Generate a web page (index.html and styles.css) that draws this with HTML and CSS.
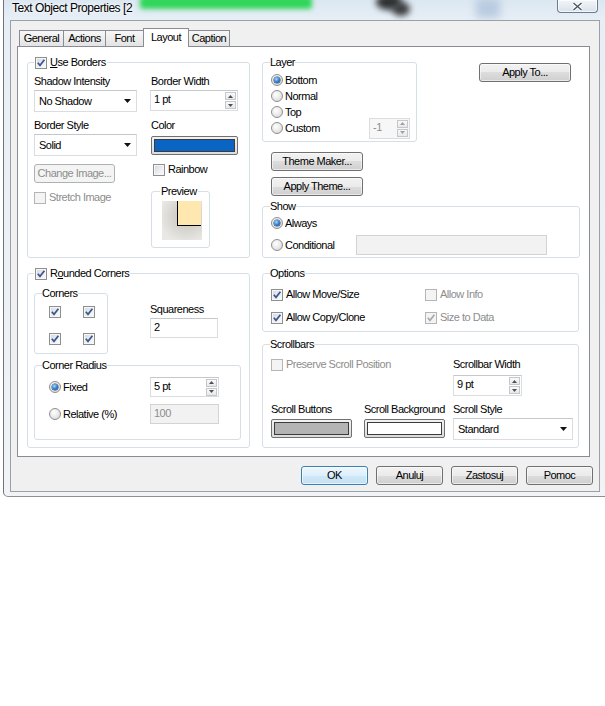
FILE: index.html
```html
<!DOCTYPE html>
<html lang="pl">
<head>
<meta charset="utf-8">
<title>Text Object Properties</title>
<link rel="stylesheet" href="styles.css">
</head>
<body>
<div class="window">
  <div class="titlebar">
    <span class="blur blur-green"></span>
    <span class="blur blur-dark"></span>
    <span class="blur blur-dark2"></span>
    <span class="blur blur-blue"></span>
    <span class="title">Text Object Properties [2</span>
    <span class="close"><svg width="11" height="9" viewBox="0 0 11 9"><path d="M1.5 1 L9.5 8 M9.5 1 L1.5 8" stroke="#ffffff" stroke-width="3.4"/><path d="M1.5 1 L9.5 8 M9.5 1 L1.5 8" stroke="#505860" stroke-width="1.5"/></svg></span>
  </div>
  <div class="client">
    <div class="tabs">
      <div class="tab t-general">General</div>
      <div class="tab t-actions">Actions</div>
      <div class="tab t-font">Font</div>
      <div class="tab t-layout active">Layout</div>
      <div class="tab t-caption">Caption</div>
    </div>
    <div class="panel">

      <fieldset class="grp g-borders">
        <legend><span class="chk"><span class="cb on"><svg viewBox="0 0 10 10"><path d="M1.8 4.8 L4 7.4 L8.4 1.8"/></svg></span><span><u>U</u>se Borders</span></span></legend>
        <div class="ub">
          <div class="ub-left">
            <div class="lbl">Shadow Intensity</div>
            <div class="combo w103 mt2"><span>No Shadow</span><svg class="arr" width="7" height="4" viewBox="0 0 7 4"><path d="M0 0H7L3.5 4Z"/></svg></div>
            <div class="lbl mt7">Border Style</div>
            <div class="combo w103 mt2"><span>Solid</span><svg class="arr" width="7" height="4" viewBox="0 0 7 4"><path d="M0 0H7L3.5 4Z"/></svg></div>
            <div class="btn dis w81 mt8">Change Image...</div>
            <div class="chk dis mt8"><span class="cb"></span><span>Stretch Image</span></div>
          </div>
          <div class="ub-right">
            <div class="lbl pl1">Border Width</div>
            <div class="spin w88 mt2"><span>1 pt</span><span class="spin-btns"><span class="sb"><svg width="5" height="3" viewBox="0 0 5 3"><path d="M0 3H5L2.5 0Z"/></svg></span><span class="sb"><svg width="5" height="3" viewBox="0 0 5 3"><path d="M0 0H5L2.5 3Z"/></svg></span></span></div>
            <div class="lbl pl1 mt8">Color</div>
            <div class="cbtn w87 ml1 mt4"><span class="sw sw-blue"></span></div>
            <div class="chk ml3 mt8"><span class="cb"></span><span>Rainbow</span></div>
            <fieldset class="grp g-prev">
              <legend>Preview</legend>
              <div class="pv"><div class="pv-in"></div></div>
            </fieldset>
          </div>
        </div>
      </fieldset>

      <div class="rc1">
        <div class="layer-row">
          <fieldset class="grp g-layer">
            <legend>Layer</legend>
            <div class="layer-rows">
              <div class="lrow"><span class="rlab"><span class="rb on"></span><span>Bottom</span></span></div>
              <div class="lrow"><span class="rlab"><span class="rb"></span><span>Normal</span></span></div>
              <div class="lrow"><span class="rlab"><span class="rb"></span><span>Top</span></span></div>
              <div class="lrow"><span class="rlab"><span class="rb"></span><span>Custom</span></span>
                <div class="spin dis w41"><span>-1</span><span class="spin-btns"><span class="sb"><svg width="5" height="3" viewBox="0 0 5 3"><path d="M0 3H5L2.5 0Z"/></svg></span><span class="sb"><svg width="5" height="3" viewBox="0 0 5 3"><path d="M0 0H5L2.5 3Z"/></svg></span></span></div>
              </div>
            </div>
          </fieldset>
          <div class="btn apply-to">Apply To...</div>
        </div>
        <div class="btn theme mt10">Theme Maker...</div>
        <div class="btn theme mt6">Apply Theme...</div>
        <fieldset class="grp g-show">
          <legend>Show</legend>
          <div class="srow1"><span class="rlab"><span class="rb on"></span><span>Always</span></span></div>
          <div class="srow2"><span class="rlab w85"><span class="rb"></span><span>Conditional</span></span><div class="txt dis w191"></div></div>
        </fieldset>
      </div>

      <fieldset class="grp g-round">
        <legend><span class="chk"><span class="cb on"><svg viewBox="0 0 10 10"><path d="M1.8 4.8 L4 7.4 L8.4 1.8"/></svg></span><span>R<u>o</u>unded Corners</span></span></legend>
        <div class="rc-top">
          <fieldset class="grp g-corners">
            <legend>Corners</legend>
            <div class="corners-grid">
              <span class="cb on"><svg viewBox="0 0 10 10"><path d="M1.8 4.8 L4 7.4 L8.4 1.8"/></svg></span>
              <span class="cb on"><svg viewBox="0 0 10 10"><path d="M1.8 4.8 L4 7.4 L8.4 1.8"/></svg></span>
              <span class="cb on"><svg viewBox="0 0 10 10"><path d="M1.8 4.8 L4 7.4 L8.4 1.8"/></svg></span>
              <span class="cb on"><svg viewBox="0 0 10 10"><path d="M1.8 4.8 L4 7.4 L8.4 1.8"/></svg></span>
            </div>
          </fieldset>
          <div class="sq">
            <div class="lbl">Squareness</div>
            <div class="txt w68 mt2">2</div>
          </div>
        </div>
        <fieldset class="grp g-radius">
          <legend>Corner Radius</legend>
          <div class="rad-row mt5"><span class="rlab w101"><span class="rb on"></span><span>Fixed</span></span>
            <div class="spin w69 h20"><span>5 pt</span><span class="spin-btns"><span class="sb"><svg width="5" height="3" viewBox="0 0 5 3"><path d="M0 3H5L2.5 0Z"/></svg></span><span class="sb"><svg width="5" height="3" viewBox="0 0 5 3"><path d="M0 0H5L2.5 3Z"/></svg></span></span></div>
          </div>
          <div class="rad-row mt7"><span class="rlab w101"><span class="rb"></span><span>Relative (%)</span></span>
            <div class="txt dis w69">100</div>
          </div>
        </fieldset>
      </fieldset>

      <div class="rc2">
        <fieldset class="grp g-opts">
          <legend>Options</legend>
          <div class="opts-grid">
            <div class="chk"><span class="cb on"><svg viewBox="0 0 10 10"><path d="M1.8 4.8 L4 7.4 L8.4 1.8"/></svg></span><span>Allow Move/Size</span></div>
            <div class="chk dis"><span class="cb"></span><span>Allow Info</span></div>
            <div class="chk"><span class="cb on"><svg viewBox="0 0 10 10"><path d="M1.8 4.8 L4 7.4 L8.4 1.8"/></svg></span><span>Allow Copy/Clone</span></div>
            <div class="chk dis"><span class="cb on"><svg viewBox="0 0 10 10"><path d="M1.8 4.8 L4 7.4 L8.4 1.8"/></svg></span><span>Size to Data</span></div>
          </div>
        </fieldset>
        <fieldset class="grp g-scroll">
          <legend>Scrollbars</legend>
          <div class="scroll-grid">
            <div class="chk dis span2"><span class="cb"></span><span>Preserve Scroll Position</span></div>
            <div class="lbl c3">Scrollbar Width</div>
            <div class="spin w69 c3 mt4"><span>9 pt</span><span class="spin-btns"><span class="sb"><svg width="5" height="3" viewBox="0 0 5 3"><path d="M0 3H5L2.5 0Z"/></svg></span><span class="sb"><svg width="5" height="3" viewBox="0 0 5 3"><path d="M0 0H5L2.5 3Z"/></svg></span></span></div>
            <div class="lbl mt7 c1">Scroll Buttons</div>
            <div class="lbl mt7">Scroll Background</div>
            <div class="lbl mt7">Scroll Style</div>
            <div class="cbtn w81 mt3"><span class="sw sw-gray"></span></div>
            <div class="cbtn w81 mt3"><span class="sw sw-white"></span></div>
            <div class="combo w120 mt2"><span>Standard</span><svg class="arr" width="7" height="4" viewBox="0 0 7 4"><path d="M0 0H7L3.5 4Z"/></svg></div>
          </div>
        </fieldset>
      </div>

    </div>
    <div class="buttons">
      <div class="btn dlg def">OK</div>
      <div class="btn dlg">Anuluj</div>
      <div class="btn dlg">Zastosuj</div>
      <div class="btn dlg">Pomoc</div>
    </div>
  </div>
</div>
</body>
</html>
```

FILE: styles.css
```css
* { box-sizing: border-box; }
html, body { margin: 0; padding: 0; background: #ffffff; }
body {
  width: 605px; height: 706px; overflow: hidden;
  font-family: "Liberation Sans", Arial, sans-serif;
  font-size: 11px; line-height: 13px; letter-spacing: -0.5px; color: #000;
}

/* window frame */
.window {
  margin-left: 3px; width: 602px; height: 497px;
  border-left: 1px solid #6f7478; border-bottom: 1px solid #8c9094;
  border-bottom-left-radius: 5px;
  background: linear-gradient(to bottom, #dbe7f1 0, #e7eff6 20px, #f1f3f6 100%);
  display: flex; flex-direction: column;
}
.titlebar {
  height: 20px; display: flex; align-items: flex-start;
  position: relative; overflow: hidden;
}
.blur { position: absolute; display: block; }
.blur-green { left: 136px; top: -4px; width: 172px; height: 13px; background: #2fd659; filter: blur(2.5px); border-radius: 3px; }
.blur-dark { left: 372px; top: -6px; width: 26px; height: 16px; background: #2e3032; filter: blur(3px); border-radius: 50%; }
.blur-dark2 { left: 388px; top: 2px; width: 18px; height: 14px; background: #3a3c3e; filter: blur(3px); border-radius: 50%; }
.blur-blue { left: 472px; top: -2px; width: 24px; height: 20px; background: #b9cbe0; filter: blur(4px); }
.title {
  position: relative; z-index: 1;
  margin-left: 8px; margin-top: 1px;
  font-size: 12px; line-height: 14px; letter-spacing: -0.45px;
  text-shadow: 0 0 6px #fff, 0 0 3px #fff;
}
.close {
  position: relative; z-index: 1;
  margin-left: auto; margin-right: 7px;
  width: 41px; height: 13px;
  border: 1px solid #6d7b8c; border-top: none; border-radius: 0 0 4px 4px;
  background: linear-gradient(#f3f6f9, #d8e1ea);
  box-shadow: inset 0 0 0 1px rgba(255,255,255,0.7);
  display: flex; align-items: center; justify-content: center;
}

.client {
  margin-left: 6px; width: 590px; height: 472px;
  border: 1px solid #9aa0a6; background: #f0f0f0;
}

/* tabs */
.tabs { display: flex; align-items: flex-end; height: 18px; margin-top: 7px; padding-left: 8px; }
.tab {
  height: 16px; margin-left: -1px;
  border: 1px solid #898c95; border-bottom: none;
  background: linear-gradient(#f7f7f7, #e3e3e3);
  text-align: center; line-height: 15px;
}
.tab.t-general { margin-left: 0; width: 45px; }
.tab.t-actions { width: 43px; }
.tab.t-font { width: 39px; }
.tab.t-layout { width: 46px; }
.tab.t-caption { width: 42px; }
.tab.active {
  height: 19px; margin-bottom: -1px; background: #fff;
  position: relative; z-index: 1; line-height: 16px;
}

.panel {
  margin-left: 6px; width: 573px; height: 411px;
  border: 1px solid #898c95; background: #fff;
  padding: 9px 0 0 9px;
  display: grid; grid-template-columns: 223px 318px; grid-template-rows: 202px 181px;
  column-gap: 12px; row-gap: 9px;
}

/* group boxes */
.grp { margin: 0; border: 1px solid #d5dfe5; border-radius: 3px; padding: 0 6px; min-width: 0; }
.grp > legend { padding: 0 1px; height: 13px; line-height: 13px; white-space: nowrap; }

.g-borders { height: 202px; }
.ub { display: flex; gap: 13px; margin-top: 6px; }
.ub-left { width: 103px; display: flex; flex-direction: column; align-items: flex-start; }
.ub-right { width: 88px; display: flex; flex-direction: column; align-items: flex-start; }

.g-prev { width: 59px; height: 63px; margin-left: 1px; margin-top: 9px; padding: 0 0 0 8px; }
.g-prev > legend { padding: 0 1px; }
.pv {
  width: 40px; height: 39px; margin-left: 2px; margin-top: 3px;
  display: flex; padding: 0 1px 14px 15px;
  background: radial-gradient(ellipse at 62% 40%, #c9c6bf 0%, #d6d3ce 38%, #e9e8e5 80%);
}
.pv-in { flex: 1; background: #fee8b0; border-left: 1px solid #000; border-bottom: 1px solid #000; }

.g-round { height: 181px; }
.rc-top { display: flex; margin-top: 7px; }
.g-corners { width: 74px; height: 67px; padding: 0 0 0 7px; }
.g-corners > legend, .g-radius > legend, .g-layer > legend, .g-show > legend, .g-opts > legend, .g-scroll > legend { padding: 0; }
.corners-grid { display: grid; grid-template-columns: 12px 12px; column-gap: 22px; row-gap: 15px; margin: 6px 0 0 7px; }
.sq { margin-left: 42px; padding-top: 16px; }
.g-radius { width: 207px; height: 81px; margin-top: 5px; padding: 0 0 0 7px; }
.rad-row { display: flex; align-items: center; margin-left: 7px; height: 20px; }

.rc1 { display: flex; flex-direction: column; align-items: flex-start; }
.layer-row { display: flex; align-items: flex-start; }
.g-layer { width: 155px; height: 86px; padding: 0 6px 0 7px; }
.layer-rows { margin-top: 3px; margin-left: 1px; }
.lrow { height: 16px; display: flex; align-items: center; justify-content: space-between; }
.apply-to { width: 92px; margin-left: 62px; margin-top: 7px; }
.theme { width: 92px; margin-left: 9px; }
.g-show { width: 318px; height: 58px; margin-top: 4px; padding: 0 0 0 7px; }
.srow1 { height: 16px; margin-top: 2px; margin-left: 1px; display: flex; align-items: center; }
.srow2 { height: 20px; margin-top: 4px; margin-left: 1px; display: flex; align-items: center; }

.rc2 { display: flex; flex-direction: column; }
.g-opts { width: 317px; height: 65px; padding: 0 0 0 7px; }
.opts-grid { display: grid; grid-template-columns: 154px auto; row-gap: 10px; margin: 8px 0 0 1px; }
.g-scroll { width: 317px; height: 110px; margin-top: 6px; padding: 0 0 0 7px; }
.scroll-grid { display: grid; grid-template-columns: 93px 89px 120px; margin: 7px 0 0 1px; align-items: start; }
.span2 { grid-column: 1 / 3; }
.c1 { grid-column: 1; }
.c3 { grid-column: 3; }

/* controls */
.lbl { height: 13px; line-height: 13px; white-space: nowrap; }
.pl1 { padding-left: 1px; }
.chk { display: inline-flex; align-items: center; gap: 3px; height: 13px; white-space: nowrap; vertical-align: top; }
.chk.dis { color: #8d8d8d; }
.cb {
  width: 12px; height: 12px; flex: none;
  border: 1px solid #8e8f8f;
  background: linear-gradient(135deg, #d3d7dc 0%, #eef0f2 60%, #fbfbfb 100%);
  box-shadow: inset 0 0 0 1px #f6f6f6;
  display: flex; align-items: center; justify-content: center;
}
.cb svg { width: 10px; height: 10px; display: block; }
.cb path { fill: none; stroke: #3b5591; stroke-width: 1.7; }
.dis .cb { border-color: #b5b5b5; background: #f4f4f4; box-shadow: none; }
.dis .cb path { stroke: #a9a9a9; }

.rlab { display: flex; align-items: center; gap: 2px; white-space: nowrap; }
.rb {
  width: 12px; height: 12px; flex: none; border-radius: 50%;
  border: 1px solid #8e8f8f;
  background: radial-gradient(circle at 40% 35%, #ffffff 0%, #eaeaea 50%, #cfcfcf 100%);
  display: flex; align-items: center; justify-content: center;
}
.rb.on::after {
  content: ""; width: 6px; height: 6px; border-radius: 50%;
  background: radial-gradient(circle at 40% 35%, #a9dcff 0%, #2a76c6 55%, #174a86 100%);
  box-shadow: 0 0 0 0.5px #1c3f6e;
}

.combo {
  height: 22px; border: 1px solid #d9dce0; border-top-color: #c4c8cd; background: #fff;
  display: flex; align-items: center; justify-content: space-between;
  padding: 0 5px 0 4px; white-space: nowrap;
}
.arr { display: block; }
.arr path { fill: #111; }

.spin {
  height: 21px; border: 1px solid #d9dce0; border-top-color: #c4c8cd; background: #fff;
  display: flex; align-items: center; justify-content: space-between;
  padding: 0 0 0 3px;
}
.spin.h20 { height: 20px; }
.spin > span:first-child { margin-top: -2px; }
.spin-btns { display: flex; flex-direction: column; gap: 1px; width: 11px; margin-right: 1px; }
.sb {
  height: 8px; border: 1px solid #c4c7cb; background: linear-gradient(#fafafa, #e6e8ea);
  display: flex; align-items: center; justify-content: center;
}
.sb svg { display: block; }
.sb path { fill: #505050; }
.spin.dis { background: #f7f7f7; color: #8d8d8d; border-color: #dcdcdc; }
.spin.dis .sb path { fill: #a0a0a0; }

.txt {
  height: 20px; border: 1px solid #d9dce0; border-top-color: #c4c8cd; background: #fff;
  padding: 2px 0 0 3px;
}
.txt.dis { background: #f2f2f2; color: #8d8d8d; border-color: #d3d3d3; }

.btn {
  height: 19px; border: 1px solid #707070; border-radius: 3px;
  background: linear-gradient(#f2f2f2 0%, #ebebeb 50%, #dddddd 50%, #cfcfcf 100%);
  box-shadow: inset 0 0 0 1px rgba(255,255,255,0.55);
  display: flex; align-items: center; justify-content: center; white-space: nowrap;
}
.btn.dis { border-color: #adb2b5; background: #f4f4f4; box-shadow: none; color: #8d8d8d; }
.btn.def {
  border-color: #3c7fb1;
  background: linear-gradient(#eef7fd 0%, #ddeffb 50%, #cfe8f8 50%, #c4e1f5 100%);
  box-shadow: inset 0 0 0 1px rgba(255,255,255,0.6);
}

.cbtn {
  height: 19px; border: 1px solid #707070; border-radius: 2px; padding: 2px;
  background: linear-gradient(#f2f2f2, #dcdcdc);
  display: flex;
}
.sw { flex: 1; border: 1px solid #3c3c3c; }
.sw-blue { background: #0a64c4; }
.sw-gray { background: #b4b4b4; }
.sw-white { background: #ffffff; }

.buttons { display: flex; justify-content: flex-end; gap: 8px; margin-top: 9px; padding-right: 6px; }
.dlg { width: 67px; }

/* sizes & spacing helpers */
.w41 { width: 41px; } .w68 { width: 68px; } .w69 { width: 69px; } .w81 { width: 81px; }
.w85 { width: 85px; } .w87 { width: 87px; } .w88 { width: 88px; } .w101 { width: 101px; }
.w103 { width: 103px; } .w120 { width: 120px; } .w191 { width: 191px; }
.mt2 { margin-top: 2px; } .mt3 { margin-top: 3px; } .mt4 { margin-top: 4px; } .mt5 { margin-top: 5px; }
.mt6 { margin-top: 6px; } .mt7 { margin-top: 7px; } .mt8 { margin-top: 8px; } .mt10 { margin-top: 10px; }
.ml1 { margin-left: 1px; } .ml3 { margin-left: 3px; }
```
